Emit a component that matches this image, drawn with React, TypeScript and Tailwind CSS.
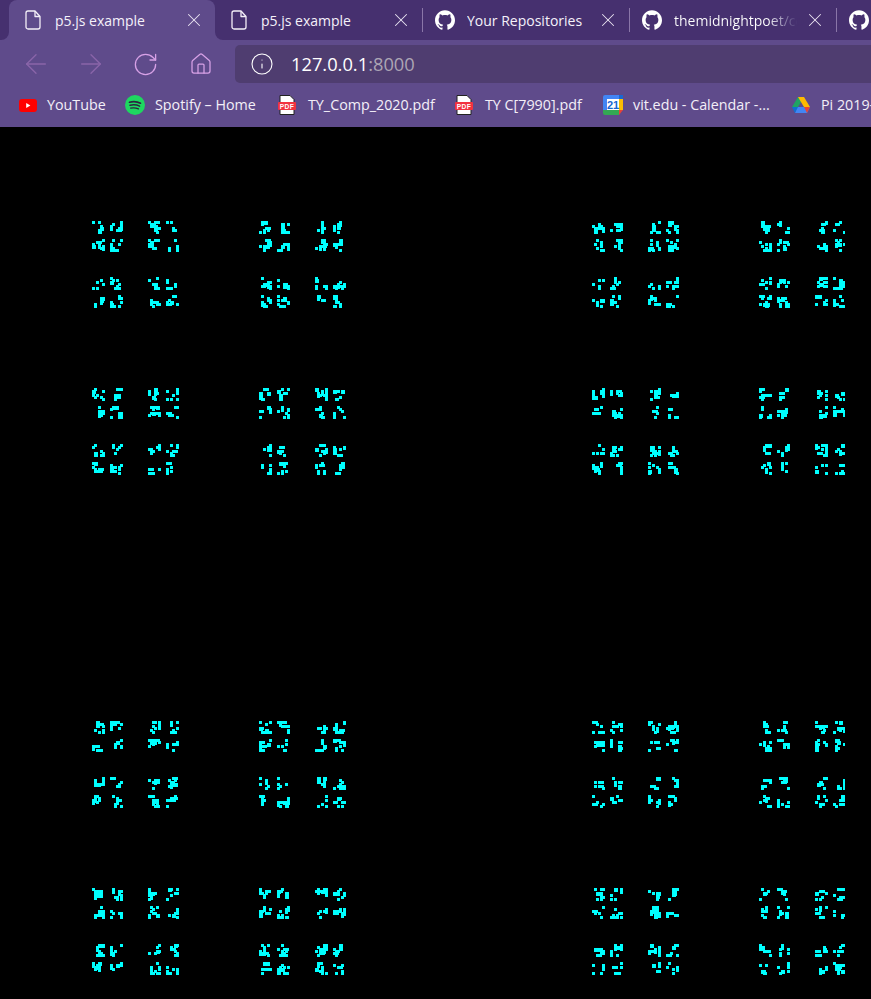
import { ArrowLeft, ArrowRight, Home, Info, RotateCw, X } from "lucide-react";
import { SiGithub } from "react-icons/si";

const font = { fontFamily: '"Open Sans", "Noto Sans", sans-serif' };

function FileIcon() {
  return (
    <svg width="16" height="20" viewBox="0 0 16 20" fill="none" stroke="#f4eff8" strokeWidth="1.3" strokeLinejoin="round" className="shrink-0">
      <path d="M1 3a2 2 0 0 1 2-2h7l5 5.5V17a2 2 0 0 1-2 2H3a2 2 0 0 1-2-2z" />
      <path d="M10 1v5.5h5" />
    </svg>
  );
}

function Tab({ title, github, active, fade }: { title: string; github?: boolean; active?: boolean; fade?: boolean }) {
  return (
    <div
      className={`flex h-10 w-[206px] shrink-0 items-center pr-[10px] ${github ? "pl-3" : active ? "pl-4" : "pl-[15px]"} ${
        active ? "rounded-t-lg bg-[#5f4b8b]" : ""
      }`}
    >
      {github ? <SiGithub size={20} color="#ffffff" className="shrink-0" /> : <FileIcon />}
      <span
        className={`min-w-0 flex-1 overflow-hidden whitespace-nowrap text-[14px] ${github ? "ml-[12px]" : "ml-[14px]"} ${
          fade ? "bg-gradient-to-r from-white from-72% to-[#46306f] to-95% bg-clip-text text-transparent" : "text-[#f5f1fa]"
        }`}
      >
        {title}
      </span>
      <X size={22} color="#ebe5f2" strokeWidth={1.1} className="shrink-0" />
    </div>
  );
}

function PdfIcon() {
  return (
    <svg width="18" height="20" viewBox="0 0 18 20" className="shrink-0">
      <path d="M2 0.5h10l4 4V19.5H2z" fill="#ffffff" stroke="#222222" />
      <rect x="0" y="7" width="18" height="8" rx="1" fill="#f2323f" />
      <text x="9" y="13.6" textAnchor="middle" fontSize="6.6" fontWeight="700" fill="#ffffff" fontFamily="Liberation Sans, sans-serif" letterSpacing="0.4">
        PDF
      </text>
    </svg>
  );
}

function YoutubeIcon() {
  return (
    <svg width="18" height="13" viewBox="0 0 18 13" className="shrink-0">
      <rect width="18" height="13" rx="3" fill="#ff0000" />
      <path d="M7.2 4v5l4.2-2.5z" fill="#ffffff" />
    </svg>
  );
}

function SpotifyIcon() {
  return (
    <svg width="20" height="20" viewBox="0 0 20 20" fill="none" className="shrink-0">
      <circle cx="10" cy="10" r="10" fill="#1ed760" />
      <path d="M4.5 7.2c3.6-1 7.6-.8 11 1" stroke="#2b2340" strokeWidth="1.7" strokeLinecap="round" />
      <path d="M5 10.3c3.2-.8 6.6-.6 9.6.9" stroke="#2b2340" strokeWidth="1.4" strokeLinecap="round" />
      <path d="M5.6 13.1c2.8-.6 5.4-.4 7.9.8" stroke="#2b2340" strokeWidth="1.2" strokeLinecap="round" />
    </svg>
  );
}

function CalendarIcon() {
  return (
    <svg width="20" height="20" viewBox="0 0 20 20" className="shrink-0">
      <path d="M2 0h14v4H4v11H0V2a2 2 0 0 1 2-2z" fill="#4285f4" />
      <rect x="16" y="0" width="4" height="4" fill="#1967d2" />
      <rect x="16" y="4" width="4" height="11" fill="#fbbc04" />
      <path d="M0 15h16v5H2a2 2 0 0 1-2-2z" fill="#34a853" />
      <path d="M16 15h4l-4 5z" fill="#ea4335" />
      <rect x="4" y="4" width="12" height="11" fill="#ffffff" />
      <text x="10" y="13.6" textAnchor="middle" fontSize="11" fontWeight="700" fill="#1967d2" fontFamily="Liberation Sans, sans-serif">
        21
      </text>
    </svg>
  );
}

function DriveIcon() {
  return (
    <svg width="18" height="16" viewBox="0 0 18 16" className="shrink-0">
      <path d="M6 0h6l-6 10H0z" fill="#1fa463" />
      <path d="M6 0h6l6 10h-6z" fill="#ffba00" />
      <path d="M4 10h14l-3 6H3z" fill="#4285f4" />
      <path d="M12 10h6l-3 6z" fill="#ea4335" />
      <path d="M0 10h6l-3 6z" fill="#0f6fd0" />
    </svg>
  );
}

function Bookmark({ icon, label, width, gap }: { icon: React.ReactNode; label: string; width: number; gap: number }) {
  return (
    <div className="flex shrink-0 items-center" style={{ width }}>
      <span className="flex shrink-0 items-center" style={{ width: gap }}>{icon}</span>
      <span className="whitespace-nowrap text-[14.3px] text-[#f3eff8]">{label}</span>
    </div>
  );
}

// seeded so the pattern stays the same between runs
function makeRandom(seed: number) {
  let s = seed;
  return () => {
    s = (s * 1664525 + 1013904223) % 4294967296;
    return s / 4294967296;
  };
}

const COLS = [92, 148, 259, 315, 592, 648, 759, 815];
const ROWS = [221, 277, 388, 444, 721, 777, 888, 944];
const TILE = 13;

function buildDots() {
  const rand = makeRandom(7919);
  const dots: { x: number; y: number; w: number; h: number }[] = [];
  for (const cy of ROWS) {
    for (const cx of COLS) {
      for (const oy of [0, 18]) {
        for (const ox of [0, 18]) {
          const strokes = 5 + Math.floor(rand() * 5);
          for (let i = 0; i < strokes; i++) {
            const gx = Math.floor(rand() * 6) * 2;
            const gy = Math.floor(rand() * 6) * 2;
            const horizontal = rand() > 0.5;
            const long = rand() > 0.65 ? 3 : 0;
            const size = rand() > 0.85 ? 4 : 3;
            dots.push({
              x: cx + ox + gx,
              y: cy + oy + gy - 128,
              w: Math.min(size + (horizontal ? long : 0), TILE - gx),
              h: Math.min(size + (horizontal ? 0 : long), TILE - gy),
            });
          }
        }
      }
    }
  }
  return dots;
}

const dots = buildDots();

export default function App() {
  return (
    <div className="h-[999px] w-[871px] overflow-hidden bg-black" style={font}>
      <div className="flex h-10 overflow-hidden bg-[#5f4b8b]">
        <div className="w-[9px] shrink-0 rounded-br-lg bg-[#46306f]" />
        <div className="shrink-0 bg-[#46306f]">
          <Tab title="p5.js example" active />
        </div>
        <div className="flex h-10 flex-1 items-center rounded-bl-lg bg-[#46306f] pl-px">
          <Tab title="p5.js example" />
          <div className="h-6 w-px shrink-0 bg-[#8a76a8]" />
          <Tab title="Your Repositories" github />
          <div className="h-6 w-px shrink-0 bg-[#8a76a8]" />
          <Tab title="themidnightpoet/code" github fade />
          <div className="h-6 w-px shrink-0 bg-[#8a76a8]" />
          <Tab title="" github />
        </div>
      </div>

      <div className="flex h-[43px] items-end bg-[#5f4b8b] pl-[8px]">
        <div className="flex h-[38px] w-[227px] shrink-0 items-center">
          <span className="flex w-[55px] justify-center"><ArrowLeft size={32} color="#8a65a9" strokeWidth={1} /></span>
          <span className="flex w-[55px] justify-center"><ArrowRight size={32} color="#8a65a9" strokeWidth={1} /></span>
          <span className="flex w-[55px] justify-center"><RotateCw size={27} color="#d7a1e6" strokeWidth={1.15} /></span>
          <span className="flex w-[55px] justify-center"><Home size={24} color="#d7a1e6" strokeWidth={1.25} /></span>
        </div>
        <div className="flex h-[38px] flex-1 items-center rounded-l-[5px] bg-[#4f3d70] pl-[15px]">
          <Info size={24} color="#ffffff" strokeWidth={1.1} className="shrink-0" />
          <span className="ml-[17px] text-[18.3px] text-white">
            127.0.0.1<span className="text-[#aca5b4]">:8000</span>
          </span>
        </div>
      </div>

      <div className="flex h-[45px] items-center overflow-hidden border-b border-black bg-[#5f4b8b] pl-[19px]">
        <Bookmark icon={<YoutubeIcon />} label="YouTube" width={106} gap={28} />
        <Bookmark icon={<SpotifyIcon />} label="Spotify – Home" width={153} gap={30} />
        <Bookmark icon={<PdfIcon />} label="TY_Comp_2020.pdf" width={177} gap={30} />
        <Bookmark icon={<PdfIcon />} label="TY C[7990].pdf" width={148} gap={30} />
        <Bookmark icon={<CalendarIcon />} label="vit.edu - Calendar -..." width={189} gap={30} />
        <Bookmark icon={<DriveIcon />} label="Pi 2019-20" width={120} gap={29} />
      </div>

      <svg width="845" height="871" shapeRendering="crispEdges" className="block">
        {dots.map((d, i) => (
          <rect key={i} x={d.x} y={d.y} width={d.w} height={d.h} fill="#00ffff" />
        ))}
      </svg>
    </div>
  );
}
